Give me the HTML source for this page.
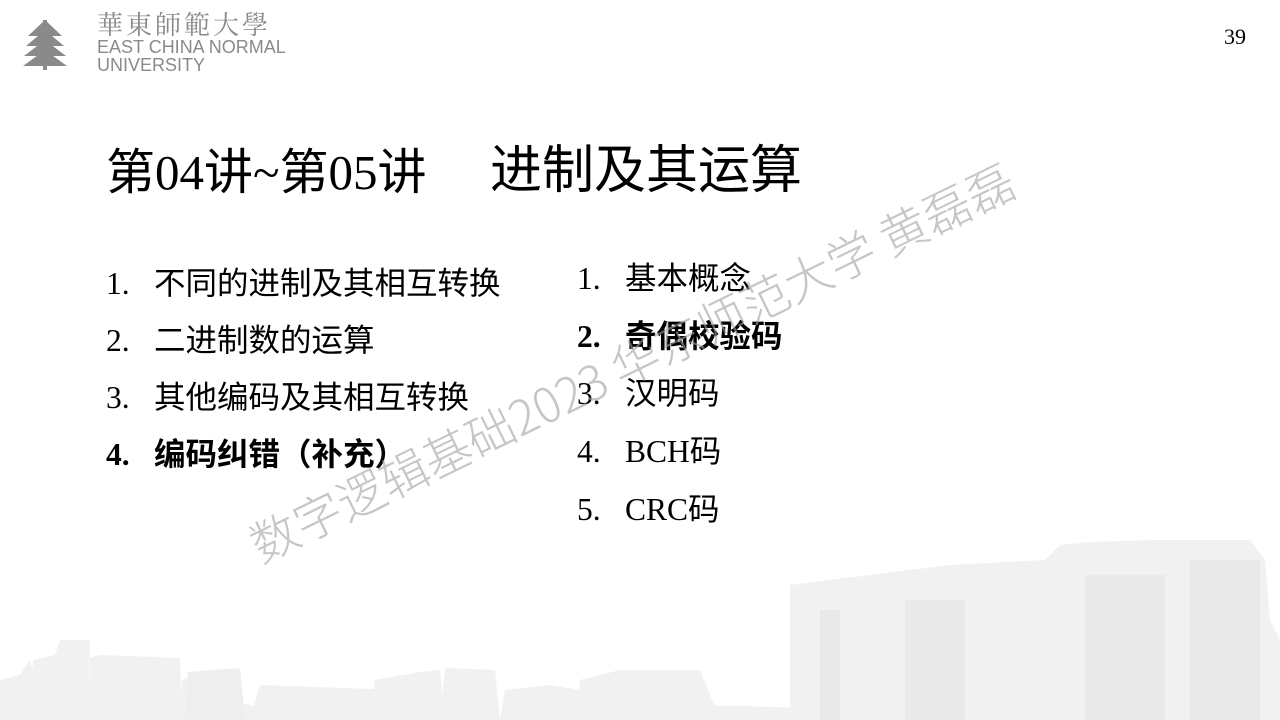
<!DOCTYPE html>
<html><head><meta charset="utf-8"><style>
body{margin:0;width:1280px;height:720px;overflow:hidden;background:#fff;position:relative;font-family:"Liberation Serif","Noto Sans CJK SC",sans-serif;color:#000}
.a{position:absolute;white-space:nowrap}
.li{font-size:31.5px;line-height:36px}
b{font-weight:bold}
</style></head><body>
<svg class="a" style="left:0;top:0" width="1280" height="720">
<g fill="#f1f1f1">
<polygon points="0,720 0,680 20,675 30,660 35,680 70,680 75,655 85,650 87,720"/>
<polygon points="30,720 33,660 55,655 60,640 90,640 88,720"/>
<polygon points="88,720 90,658 100,655 180,658 182,720"/>
<polygon points="180,720 182,680 200,675 215,670 225,700 250,705 280,720"/>
<polygon points="240,720 260,705 300,700 330,698 360,695 400,692 420,720"/>
<polygon points="185,720 188,672 240,668 245,720" fill="#eee"/>
<polygon points="370,720 375,680 420,672 440,670 445,720"/>
<polygon points="440,720 445,668 495,670 500,720"/>
<polygon points="250,720 260,685 400,690 420,720"/>
<polygon points="500,720 505,690 550,685 580,690 585,720"/>
<polygon points="575,720 580,680 600,675 620,670 645,670 650,700 700,705 1280,720"/>
<polygon points="640,720 640,670 700,670 720,720"/>
<polygon points="790,720 790,585 830,580 950,565 1045,560 1060,545 1090,542 1150,540 1250,540 1265,560 1270,620 1280,640 1280,720"/>
</g>
<g fill="#e9e9e9">
<rect x="820" y="610" width="20" height="110"/>
<rect x="905" y="600" width="60" height="120"/>
<rect x="1085" y="575" width="80" height="145"/>
<rect x="1190" y="560" width="70" height="160"/>
</g>
</svg>
<svg class="a" style="left:8px;top:6px" width="75" height="75" viewBox="0 0 75 75">
<g fill="#8a8a8a">
<rect x="35" y="14" width="4" height="50"/>
<polygon points="37,14 20,30 54,30"/>
<polygon points="37,24 18,40 56,40"/>
<polygon points="37,34 16,50 58,50"/>
<polygon points="37,44 15,60 59,60"/>
</g>
</svg>
<div class="a" style="left:97px;top:9px;font-size:26px;color:#8a8a8a;font-family:'Noto Serif CJK SC',serif;letter-spacing:3px;line-height:30px">華東師範大學</div>
<div class="a" style="left:97px;top:38px;font-size:18px;color:#8a8a8a;font-family:'Liberation Sans',sans-serif;line-height:18px">EAST CHINA NORMAL<br>UNIVERSITY</div>
<div class="a" style="left:1224px;top:24px;font-size:22px">39</div>
<div class="a" style="left:106px;top:141px;font-size:49px;line-height:64px">第04讲~第05讲</div>
<div class="a" style="left:490px;top:140px;font-size:52px;line-height:64px">进制及其运算</div>
<div class="a li" style="left:106px;top:266px">1.<span style="position:absolute;left:48px">不同的进制及其相互转换</span></div>
<div class="a li" style="left:106px;top:323px">2.<span style="position:absolute;left:48px">二进制数的运算</span></div>
<div class="a li" style="left:106px;top:380px">3.<span style="position:absolute;left:48px">其他编码及其相互转换</span></div>
<div class="a li" style="left:106px;top:437px"><b>4.</b><span style="position:absolute;left:48px;font-weight:bold">编码纠错（补充）</span></div>
<div class="a li" style="left:577px;top:261px">1.<span style="position:absolute;left:48px">基本概念</span></div>
<div class="a li" style="left:577px;top:319px"><b>2.</b><span style="position:absolute;left:48px;font-weight:bold">奇偶校验码</span></div>
<div class="a li" style="left:577px;top:376px">3.<span style="position:absolute;left:48px">汉明码</span></div>
<div class="a li" style="left:577px;top:434px">4.<span style="position:absolute;left:48px">BCH码</span></div>
<div class="a li" style="left:577px;top:492px">5.<span style="position:absolute;left:48px">CRC码</span></div>
<div class="a" style="left:265px;top:512px;font-size:48px;color:rgba(160,160,160,0.6);transform:rotate(-26deg);transform-origin:0 100%;font-family:'Noto Sans CJK SC',sans-serif;line-height:60px;font-weight:300">数字逻辑基础2023 华东师范大学 黄磊磊</div>
</body></html>
